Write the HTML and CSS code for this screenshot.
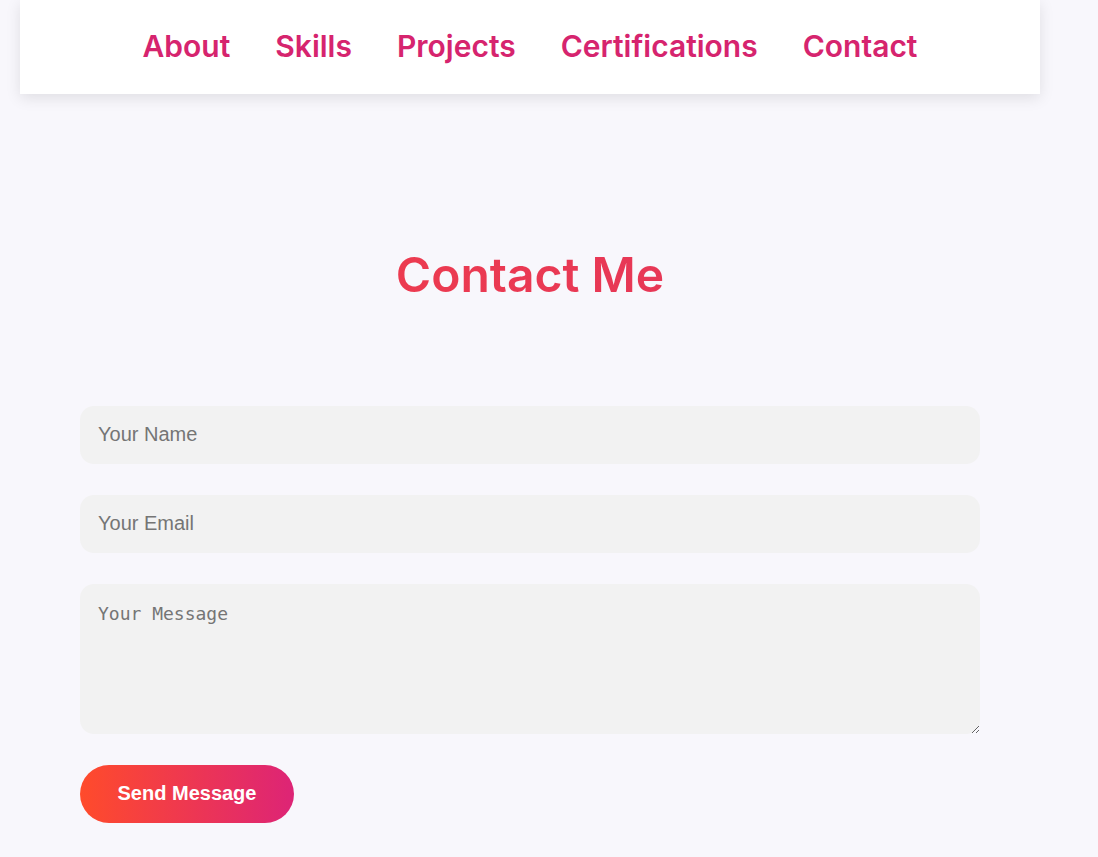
FILE: index.html
```html
<!DOCTYPE html>
<html lang="en">
<head>
<meta charset="utf-8">
<title>Contact</title>
<link rel="stylesheet" href="styles.css">
</head>
<body>
<div class="page">
  <header class="nav">
    <a href="#" class="nav-link">About</a>
    <a href="#" class="nav-link">Skills</a>
    <a href="#" class="nav-link">Projects</a>
    <a href="#" class="nav-link">Certifications</a>
    <a href="#" class="nav-link">Contact</a>
  </header>
  <section class="contact">
    <h2 class="title">Contact Me</h2>
    <form class="form">
      <input class="field" type="text" placeholder="Your Name">
      <input class="field" type="email" placeholder="Your Email">
      <textarea class="field area" placeholder="Your Message"></textarea>
      <button type="button" class="send">Send Message</button>
    </form>
  </section>
</div>
</body>
</html>
```
FILE: styles.css
```css
* { box-sizing: border-box; }
html, body { margin: 0; padding: 0; }
body {
  background: #f8f7fc;
  font-family: "Inter", "Liberation Sans", sans-serif;
  height: 857px;
  overflow: hidden;
}
.page {
  width: 1060px;
}
.nav {
  margin: 0 20px;
  height: 94px;
  background: #ffffff;
  box-shadow: 0 4px 14px rgba(0, 0, 0, 0.1);
  display: flex;
  justify-content: center;
  align-items: center;
  gap: 45px;
  padding-bottom: 2px;
}
.nav-link {
  color: #d6246e;
  text-decoration: none;
  font-weight: 600;
  font-size: 30px;
}
.contact {
  padding: 0 80px;
}
.title {
  margin: 152px 0 0;
  text-align: center;
  font-size: 48px;
  font-weight: 600;
  line-height: 1.2;
  background: linear-gradient(90deg, #f23e48, #e1345e);
  -webkit-background-clip: text;
  background-clip: text;
  color: transparent;
}
.form {
  margin-top: 102px;
  display: flex;
  flex-direction: column;
  align-items: flex-start;
  gap: 31px;
}
.field {
  width: 100%;
  height: 58px;
  border: none;
  outline: none;
  background: #f2f2f2;
  border-radius: 14px;
  padding: 0 18px;
  font-family: "Liberation Sans", Arial, sans-serif;
  font-size: 20px;
  color: #333;
}
.field::placeholder { color: #757575; }
.area {
  height: 150px;
  padding: 19px 18px;
  font-family: "DejaVu Sans Mono", "Liberation Mono", monospace;
  font-size: 18px;
  resize: vertical;
}
.send {
  width: 214px;
  height: 58px;
  border: none;
  border-radius: 29px;
  background: linear-gradient(90deg, #ff4b2b, #dd2476);
  color: #ffffff;
  font-family: "Liberation Sans", Arial, sans-serif;
  font-weight: 700;
  font-size: 20px;
  cursor: pointer;
}
```
